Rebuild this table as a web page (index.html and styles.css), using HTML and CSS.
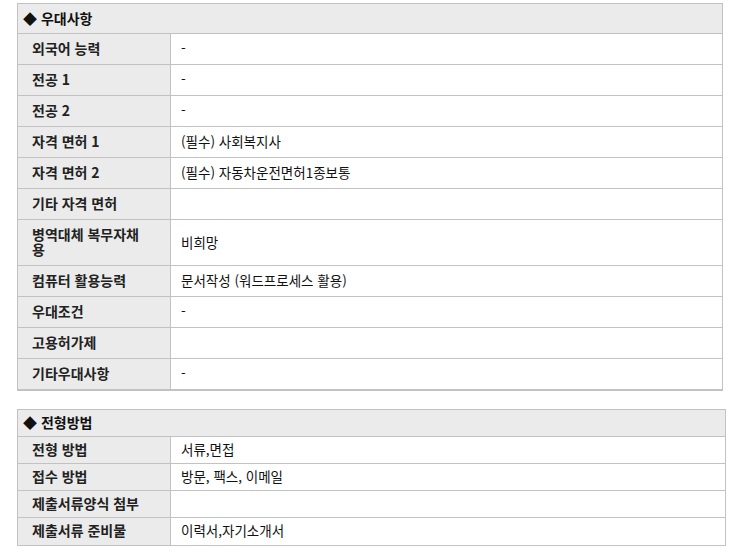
FILE: index.html
```html
<!DOCTYPE html>
<html lang="ko">
<head>
<meta charset="utf-8">
<link rel="stylesheet" href="styles.css">
</head>
<body>
<div class="page">
  <table class="info first">
    <colgroup><col class="c-label"><col></colgroup>
    <tr><th colspan="2" class="head">◆ 우대사항</th></tr>
    <tr><td class="label">외국어 능력</td><td class="value">-</td></tr>
    <tr><td class="label">전공 1</td><td class="value">-</td></tr>
    <tr><td class="label">전공 2</td><td class="value">-</td></tr>
    <tr><td class="label">자격 면허 1</td><td class="value">(필수) 사회복지사</td></tr>
    <tr><td class="label">자격 면허 2</td><td class="value">(필수) 자동차운전면허1종보통</td></tr>
    <tr><td class="label">기타 자격 면허</td><td class="value"></td></tr>
    <tr><td class="label">병역대체 복무자채용</td><td class="value">비희망</td></tr>
    <tr><td class="label">컴퓨터 활용능력</td><td class="value">문서작성 (워드프로세스 활용)</td></tr>
    <tr><td class="label">우대조건</td><td class="value">-</td></tr>
    <tr><td class="label">고용허가제</td><td class="value"></td></tr>
    <tr class="last"><td class="label">기타우대사항</td><td class="value">-</td></tr>
  </table>

  <table class="info second">
    <colgroup><col class="c-label"><col></colgroup>
    <tr><th colspan="2" class="head">◆ 전형방법</th></tr>
    <tr><td class="label">전형 방법</td><td class="value">서류,면접</td></tr>
    <tr><td class="label">접수 방법</td><td class="value">방문, 팩스, 이메일</td></tr>
    <tr><td class="label">제출서류양식 첨부</td><td class="value"></td></tr>
    <tr class="last"><td class="label">제출서류 준비물</td><td class="value">이력서,자기소개서</td></tr>
  </table>
</div>
</body>
</html>
```

FILE: styles.css
```css
html, body {
  margin: 0;
  padding: 0;
  background: #fff;
}
.page {
  padding: 3px 0 0 17px;
  font-family: "Noto Sans CJK KR", "Noto Sans", sans-serif;
  font-size: 14px;
  color: #111;
}
.info {
  border-collapse: collapse;
  table-layout: fixed;
}
.info.first {
  width: 706px;
}
.info.second {
  width: 709px;
  margin-top: 18px;
}
.c-label {
  width: 153px;
}
.info th, .info td {
  border: 1px solid #c2c2c2;
  line-height: 15px;
  text-align: left;
  vertical-align: middle;
  word-break: normal;
}
.head {
  background: #ebebeb;
  font-weight: bold;
  padding: 7px 5px 7px;
  color: #111;
}
.label {
  background: #ebebeb;
  font-weight: bold;
  padding: 7px 20px 8px 14px;
  color: #222;
}
.value {
  padding: 7px 10px 8px;
  background: #fff;
  font-size: 13.5px;
}
.first tr.last td {
  border-bottom: 2px solid #c2c2c2;
}
.second .head {
  padding: 5px 5px 6px;
}
.second .label, .second .value {
  padding-top: 5px;
  padding-bottom: 6px;
}
.second tr.last td {
  padding-bottom: 7px;
}
```
